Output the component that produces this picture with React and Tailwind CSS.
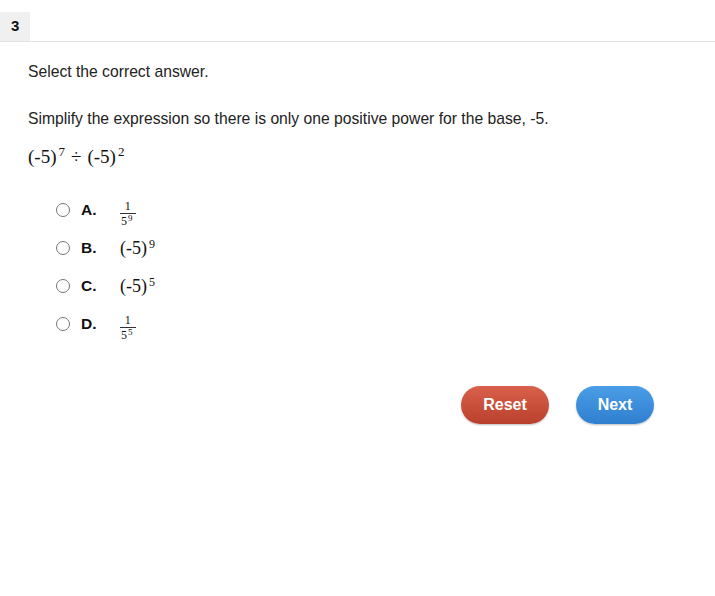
import React, { useState } from 'react';

const sans = { fontFamily: '"Liberation Sans", Arial, sans-serif' };

function Frac({ den, sup }) {
  return (
    <span className="inline-flex flex-col items-center leading-none text-[12px] font-['Liberation_Serif',serif] text-[#111]">
      <span className="px-[2px] pb-[1px]">1</span>
      <span className="border-t border-[#333] pl-[1px] pr-[3px] pt-[1px]">
        {den}
        <sup className="text-[9px] relative -top-[4px] ml-[1px]">{sup}</sup>
      </span>
    </span>
  );
}

function Power({ exp }) {
  return (
    <span className="font-['Liberation_Serif',serif] text-[18px] text-[#111]">
      (-5)<sup className="text-[12px] relative -top-[6px] ml-[2px]">{exp}</sup>
    </span>
  );
}

const options = [
  { key: 'A', body: <Frac den="5" sup="9" />, gap: 'ml-[23px]' },
  { key: 'B', body: <Power exp="9" />, gap: 'ml-[23px]' },
  { key: 'C', body: <Power exp="5" />, gap: 'ml-[23px]' },
  { key: 'D', body: <Frac den="5" sup="5" />, gap: 'ml-[23px]' },
];

function App() {
  const [picked, setPicked] = useState('');

  return (
    <div className="w-[715px] h-[596px] bg-white text-[#222]" style={sans}>
      <div className="h-[42px] pt-[12px] border-b border-[#e3e3e3]">
        <div className="w-[30px] h-[29px] bg-[#f0f0f0] flex items-center pl-[11px] text-[15px] font-bold text-[#111]">
          3
        </div>
      </div>

      <div className="pl-[28px] pt-[20px]">
        <p className="text-[15.7px] leading-[19px]">Select the correct answer.</p>
        <p className="text-[15.7px] leading-[19px] mt-[28px]">
          Simplify the expression so there is only one positive power for the base, -5.
        </p>
        <p className="mt-[17px] text-[19px] leading-[24px] font-['Liberation_Serif',serif] text-[#111]">
          (-5)<sup className="text-[13px] relative -top-[7px] ml-[2px]">7</sup>
          <span className="mx-[6px]">÷</span>
          (-5)<sup className="text-[13px] relative -top-[7px] ml-[2px]">2</sup>
        </p>

        <div className="mt-[29px] pl-[28px] flex flex-col gap-[14px]">
          {options.map((o) => (
            <label key={o.key} className="flex items-center h-[24px] cursor-pointer">
              <input
                type="radio"
                name="answer"
                checked={picked === o.key}
                onChange={() => setPicked(o.key)}
                className="w-[14px] h-[14px] m-0 accent-[#555]"
              />
              <span className="ml-[11px] w-[16px] text-[15.5px] font-bold text-[#111]">{o.key}.</span>
              <span className={o.gap}>{o.body}</span>
            </label>
          ))}
        </div>
      </div>

      <div className="flex justify-end gap-[27px] pr-[61px] mt-[50px]">
        <button className="w-[88px] h-[38px] rounded-full bg-gradient-to-b from-[#d9604a] to-[#b9402c] text-white text-[16px] font-bold shadow-[0_1px_2px_rgba(0,0,0,0.25)]">
          Reset
        </button>
        <button className="w-[78px] h-[38px] rounded-full bg-gradient-to-b from-[#4a9de6] to-[#2f7fcf] text-white text-[16px] font-bold shadow-[0_1px_2px_rgba(0,0,0,0.25)]">
          Next
        </button>
      </div>
    </div>
  );
}

export default App;
